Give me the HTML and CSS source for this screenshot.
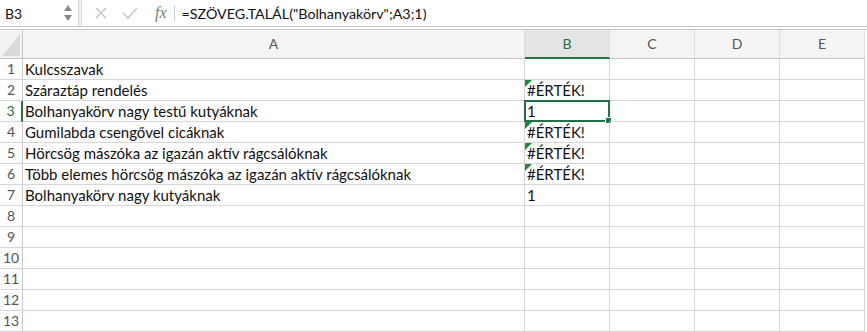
FILE: index.html
```html
<!DOCTYPE html>
<html lang="hu">
<head>
  <meta charset="UTF-8">
  <title>Munkafüzet</title>
  <link rel="stylesheet" href="styles.css">
</head>
<body>

<div class="formula-bar">
  <div class="name-box">
    <span>B3</span>
    <svg class="spin" width="10" height="18" viewBox="0 0 10 18">
      <path d="M1 7 L5 1 L9 7 Z" fill="#8a8a8a"/>
      <path d="M1 11 L5 17 L9 11 Z" fill="#8a8a8a"/>
    </svg>
  </div>
  <div class="formula-box">
    <svg class="tool" width="14" height="14" viewBox="0 0 14 14">
      <path d="M2 2 L12 12 M12 2 L2 12" stroke="#c8c8c8" stroke-width="1.6" fill="none"/>
    </svg>
    <svg class="tool" width="16" height="14" viewBox="0 0 16 14">
      <path d="M1 7 L6 12 L15 2" stroke="#c8c8c8" stroke-width="1.6" fill="none"/>
    </svg>
    <span class="fx">fx</span>
    <span class="formula">=SZÖVEG.TALÁL("Bolhanyakörv";A3;1)</span>
  </div>
</div>

<div class="sheet">
  <div class="row head-row">
    <div class="rh corner"><svg width="22" height="28" viewBox="0 0 22 28"><path d="M2 26 L20 26 L20 4 Z" fill="#dadada"/></svg></div>
    <div class="ch col-a">A</div>
    <div class="ch col-n active">B</div>
    <div class="ch col-n">C</div>
    <div class="ch col-n">D</div>
    <div class="ch col-n">E</div>
  </div>

  <div class="row"><div class="rh">1</div><div class="c col-a">Kulcsszavak</div><div class="c col-n"></div><div class="c col-n"></div><div class="c col-n"></div><div class="c col-n"></div></div>
  <div class="row"><div class="rh">2</div><div class="c col-a">Száraztáp rendelés</div><div class="c col-n err">#ÉRTÉK!</div><div class="c col-n"></div><div class="c col-n"></div><div class="c col-n"></div></div>
  <div class="row"><div class="rh active">3</div><div class="c col-a">Bolhanyakörv nagy testű kutyáknak</div><div class="c col-n sel">1</div><div class="c col-n"></div><div class="c col-n"></div><div class="c col-n"></div></div>
  <div class="row"><div class="rh">4</div><div class="c col-a">Gumilabda csengővel cicáknak</div><div class="c col-n err">#ÉRTÉK!</div><div class="c col-n"></div><div class="c col-n"></div><div class="c col-n"></div></div>
  <div class="row"><div class="rh">5</div><div class="c col-a">Hörcsög mászóka az igazán aktív rágcsálóknak</div><div class="c col-n err">#ÉRTÉK!</div><div class="c col-n"></div><div class="c col-n"></div><div class="c col-n"></div></div>
  <div class="row"><div class="rh">6</div><div class="c col-a">Több elemes hörcsög mászóka az igazán aktív rágcsálóknak</div><div class="c col-n err">#ÉRTÉK!</div><div class="c col-n"></div><div class="c col-n"></div><div class="c col-n"></div></div>
  <div class="row"><div class="rh">7</div><div class="c col-a">Bolhanyakörv nagy kutyáknak</div><div class="c col-n">1</div><div class="c col-n"></div><div class="c col-n"></div><div class="c col-n"></div></div>
  <div class="row"><div class="rh">8</div><div class="c col-a"></div><div class="c col-n"></div><div class="c col-n"></div><div class="c col-n"></div><div class="c col-n"></div></div>
  <div class="row"><div class="rh">9</div><div class="c col-a"></div><div class="c col-n"></div><div class="c col-n"></div><div class="c col-n"></div><div class="c col-n"></div></div>
  <div class="row"><div class="rh">10</div><div class="c col-a"></div><div class="c col-n"></div><div class="c col-n"></div><div class="c col-n"></div><div class="c col-n"></div></div>
  <div class="row"><div class="rh">11</div><div class="c col-a"></div><div class="c col-n"></div><div class="c col-n"></div><div class="c col-n"></div><div class="c col-n"></div></div>
  <div class="row"><div class="rh">12</div><div class="c col-a"></div><div class="c col-n"></div><div class="c col-n"></div><div class="c col-n"></div><div class="c col-n"></div></div>
  <div class="row"><div class="rh">13</div><div class="c col-a"></div><div class="c col-n"></div><div class="c col-n"></div><div class="c col-n"></div><div class="c col-n"></div></div>
</div>

</body>
</html>
```

FILE: styles.css
```css
body {
    margin: 0;
    padding: 0;
    background-color: #fff;
    font-family: Lato, "Open Sans", sans-serif;
    color: #111;
    overflow: hidden;
}

.formula-bar {
    display: flex;
    height: 26px;
    border-bottom: 1px solid #c6c6c6;
    background-color: #f2f2f2;
}

.name-box {
    width: 79px;
    box-sizing: border-box;
    display: flex;
    align-items: center;
    justify-content: space-between;
    padding: 0 5px 0 5px;
    background-color: #fff;
    border-right: 1px solid #d0d0d0;
    font-size: 14px;
}

.formula-box {
    flex: 1;
    margin-left: 2px;
    display: flex;
    align-items: center;
    background-color: #fff;
    border-left: 1px solid #d8d8d8;
    padding-left: 12px;
}

.tool {
    margin-right: 14px;
}

.tool + .tool {
    margin-right: 17px;
}

.fx {
    font-family: "Liberation Serif", serif;
    font-style: italic;
    font-size: 16px;
    color: #777;
    padding-right: 7px;
    border-right: 1px solid #d0d0d0;
    line-height: 16px;
}

.formula {
    margin-left: 7px;
    font-size: 14.3px;
    color: #111;
}

.sheet {
    margin-top: 2px;
    border-top: 1px solid #c6c6c6;
}

.row {
    display: flex;
    height: 21px;
}

.head-row {
    height: 29px;
}

.rh, .c, .ch {
    box-sizing: border-box;
    flex-shrink: 0;
    border-right: 1px solid #d6d6d6;
    border-bottom: 1px solid #d6d6d6;
}

.rh {
    width: 23px;
    text-align: center;
    font-size: 14px;
    line-height: 20px;
    color: #555;
    border-right-color: #c8c8c8;
}

.rh.active {
    color: #217346;
    border-right: 2px solid #217346;
}

.corner {
    background-color: #f3f3f3;
    border-bottom-color: #c8c8c8;
}

.corner svg {
    display: block;
}

.ch {
    background-color: #f4f4f4;
    text-align: center;
    font-size: 14px;
    line-height: 28px;
    color: #555;
    border-right-color: #dedede;
    border-bottom-color: #c8c8c8;
}

.ch.active {
    background-color: #e4e4e4;
    color: #217346;
    border-bottom: 2px solid #217346;
}

.col-a {
    width: 502px;
}

.col-n {
    width: 85px;
}

.c {
    font-size: 15px;
    line-height: 20px;
    padding-left: 2px;
    white-space: nowrap;
    position: relative;
}

.err::before {
    content: "";
    position: absolute;
    left: 0;
    top: 0;
    border-top: 7px solid #1e8b34;
    border-right: 7px solid transparent;
}

.sel {
    border: 2px solid #217346;
    margin-top: -1px;
    margin-left: -1px;
    height: 22px;
    width: 86px;
    padding-left: 1px;
    line-height: 19px;
}

.sel::after {
    content: "";
    position: absolute;
    right: -4px;
    bottom: -4px;
    width: 5px;
    height: 5px;
    background-color: #217346;
    border: 1px solid #fff;
}
```
